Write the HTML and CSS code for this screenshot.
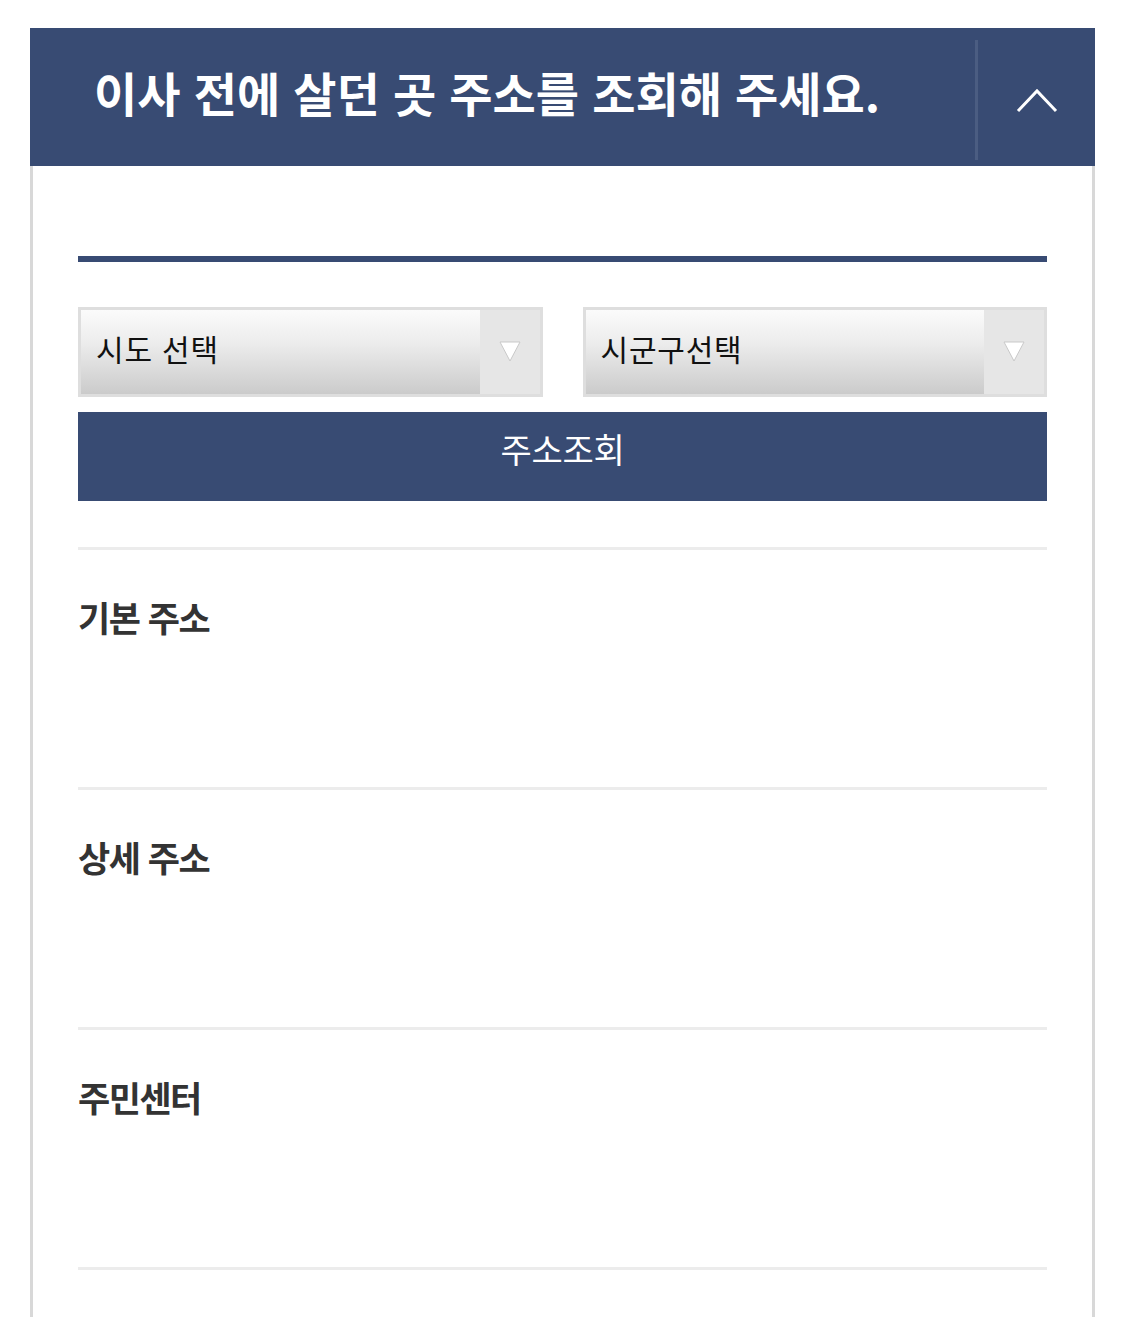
FILE: index.html
```html
<!DOCTYPE html>
<html lang="ko">
<head>
<meta charset="utf-8">
<title>주소 조회</title>
<link rel="stylesheet" href="styles.css">
</head>
<body>
<section class="panel">
  <header class="panel-head">
    <h1 class="panel-title">이사 전에 살던 곳 주소를 조회해 주세요.</h1>
    <button class="panel-toggle" type="button" aria-label="접기">
      <svg width="42" height="26" viewBox="0 0 42 26"><polyline points="2,24 21,4 40,24" fill="none" stroke="#fff" stroke-width="3"/></svg>
    </button>
  </header>
  <div class="panel-body">
    <div class="rule"></div>
    <div class="selects">
      <div class="select">
        <span class="select-label">시도 선택</span>
        <span class="select-arrow"><svg width="22" height="21" viewBox="0 0 22 21"><polygon points="1,1 21,1 11,20" fill="#fff" stroke="#c9c9c9" stroke-width="1"/></svg></span>
      </div>
      <div class="select">
        <span class="select-label">시군구선택</span>
        <span class="select-arrow"><svg width="22" height="21" viewBox="0 0 22 21"><polygon points="1,1 21,1 11,20" fill="#fff" stroke="#c9c9c9" stroke-width="1"/></svg></span>
      </div>
    </div>
    <button class="search-btn" type="button">주소조회</button>
    <div class="info-row"><h2 class="info-label">기본 주소</h2></div>
    <div class="info-row"><h2 class="info-label">상세 주소</h2></div>
    <div class="info-row"><h2 class="info-label">주민센터</h2></div>
    <div class="info-row info-row-end"></div>
  </div>
</section>
</body>
</html>
```
FILE: styles.css
```css
html, body {
  margin: 0;
  padding: 0;
  background: #fff;
  font-family: "Noto Sans CJK KR", "Noto Sans", sans-serif;
}
.panel {
  margin: 28px 30px 0;
  width: 1065px;
}
.panel-head {
  display: flex;
  height: 138px;
  background: #384b73;
}
.panel-title {
  flex: 1;
  margin: 0;
  padding-left: 64px;
  display: flex;
  align-items: center;
  padding-bottom: 11px;
  color: #fff;
  font-size: 47px;
  font-weight: 700;
  letter-spacing: 0;
}
.panel-toggle {
  width: 120px;
  margin: 12px 0 6px;
  padding: 0;
  border: 0;
  border-left: 3px solid #4b5d82;
  background: transparent;
  display: flex;
  align-items: center;
  justify-content: center;
}
.panel-body {
  border-left: 3px solid #d8d8d8;
  border-right: 3px solid #d8d8d8;
  padding: 90px 45px 0;
  min-height: 1061px;
}
.rule {
  height: 6px;
  background: #384b73;
}
.selects {
  margin-top: 45px;
  display: grid;
  grid-template-columns: 1fr 1fr;
  gap: 40px;
}
.select {
  height: 84px;
  border: 3px solid #dedede;
  display: flex;
}
.select-label {
  flex: 1;
  display: flex;
  align-items: center;
  padding-left: 15px;
  padding-bottom: 9px;
  font-size: 30px;
  letter-spacing: 0.8px;
  color: #111;
  background: linear-gradient(#fbfbfb 0%, #ececec 40%, #cbcbcb 100%);
}
.select-arrow {
  width: 60px;
  background: #e6e6e6;
  display: flex;
  align-items: center;
  justify-content: center;
  padding-bottom: 2px;
}
.search-btn {
  display: block;
  width: 100%;
  height: 89px;
  margin-top: 15px;
  margin-bottom: 46px;
  border: 0;
  background: #384b73;
  color: #fff;
  font-family: "Noto Sans CJK KR", "Noto Sans", sans-serif;
  font-size: 34px;
  font-weight: 400;
  padding-bottom: 18px;
  letter-spacing: -0.3px;
}
.info-row {
  border-top: 3px solid #ececec;
  height: 237px;
}
.info-row-end {
  height: 44px;
}
.info-label {
  margin: 0;
  padding-top: 47px;
  font-size: 35px;
  line-height: 40px;
  font-weight: 700;
  color: #333;
  letter-spacing: -1.5px;
}
```
